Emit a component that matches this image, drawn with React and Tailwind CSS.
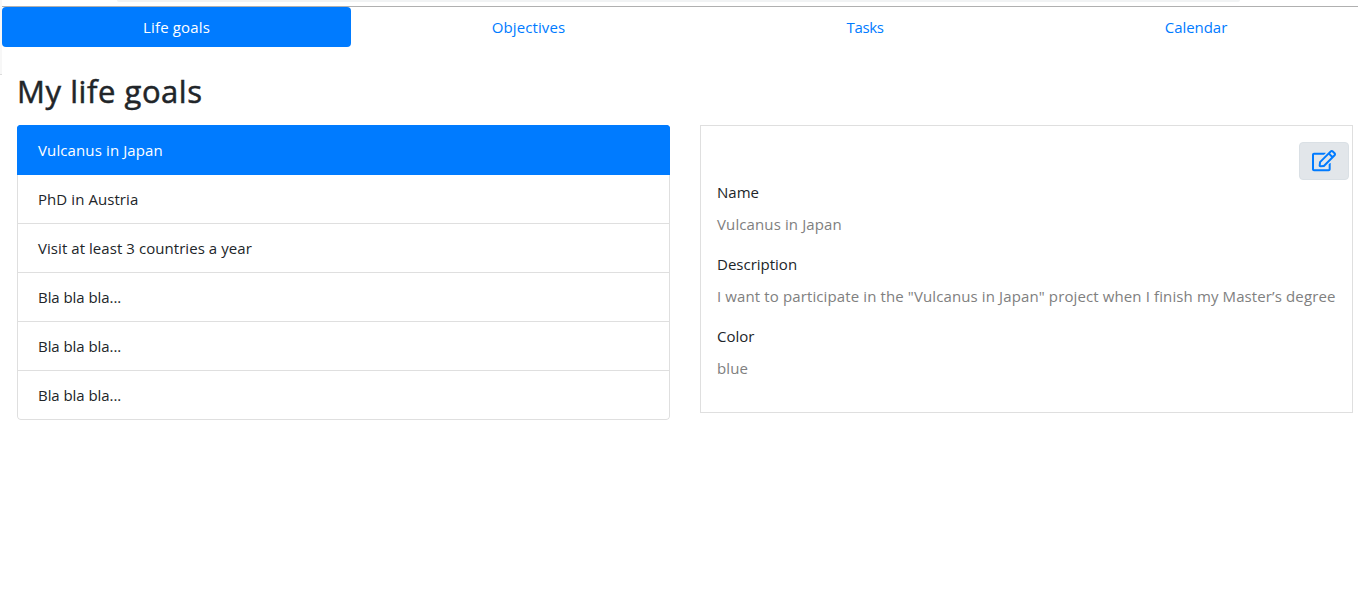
import { FaRegEdit } from "react-icons/fa";

const tabs = [
  { label: "Life goals", width: "w-[349px]", text: "tracking-[0.15px]", active: true },
  { label: "Objectives", width: "w-[355px]", text: "tracking-[0.1px]" },
  { label: "Tasks", width: "w-[318px]", text: "tracking-[-0.4px]" },
  { label: "Calendar", width: "w-[344px]", text: "tracking-[-0.05px]" },
];

const goals = [
  { name: "Vulcanus in Japan", text: "tracking-[0.12px]" },
  { name: "PhD in Austria", text: "tracking-[0.07px]" },
  { name: "Visit at least 3 countries a year", text: "tracking-[0.06px]" },
  { name: "Bla bla bla...", text: "tracking-[-0.06px]" },
  { name: "Bla bla bla...", text: "tracking-[-0.06px]" },
  { name: "Bla bla bla...", text: "tracking-[-0.06px]" },
];

const fields = [
  ["Name", "Vulcanus in Japan"],
  ["Description", "I want to participate in the \"Vulcanus in Japan\" project when I finish my Master’s degree"],
  ["Color", "blue"],
];

export default function App() {
  return (
    <div className="relative h-[612px] w-full overflow-hidden bg-white font-['Open_Sans','Noto_Sans',sans-serif] text-[15px] leading-6 text-[#212529]">
      <div className="absolute left-0 top-0 h-[75px] w-[2px] border-b border-[#dcdcdc] bg-[#f7f7f7]" />
      <div className="ml-[2px] w-[1366px]">
        <div className="h-[7px] border-b border-[#b0b0b0] pl-[115px]">
          <div className="h-[2px] w-[1123px] rounded-b-[4px] bg-[#f1f3f4]" />
        </div>
        <nav className="flex">
          {tabs.map((t) => (
            <a
              key={t.label}
              className={`${t.width} ${t.text} shrink-0 rounded py-2 text-center ${t.active ? "bg-[#007bff] text-white" : "text-[#007bff]"}`}
            >
              {t.label}
            </a>
          ))}
        </nav>
        <main className="px-[15px] pt-[25px]">
          <h1 className="text-[31px] font-medium leading-[38px] tracking-[0.56px] [-webkit-text-stroke:0.5px_#212529]">
            <span>My life goals</span>
          </h1>
          <div className="mt-[15px] flex gap-[30px]">
            <ul className="w-[653px] overflow-hidden rounded">
              {goals.map((g, i) => (
                <li
                  key={i}
                  className={
                    i === 0
                      ? "border border-[#007bff] bg-[#007bff] px-5 py-3 text-white"
                      : "border border-t-0 border-[#dfdfdf] px-5 py-3 last:rounded-b"
                  }
                >
                  <span className={g.text}>{g.name}</span>
                </li>
              ))}
            </ul>
            <section className="h-[288px] w-[653px] border border-[#dfdfdf] pl-4 pr-[3px] pt-4">
              <div className="flex justify-end">
                <button className="flex h-[38px] w-[50px] items-center justify-center rounded border border-[#dae0e5] bg-[#e2e6ea] text-[#007bff]">
                  <FaRegEdit className="h-[21.333px] w-6" />
                </button>
              </div>
              <dl>
                {fields.map(([name, value]) => (
                  <div key={name} className="mb-4">
                    <dt className="mb-2">
                      <span>{name}</span>
                    </dt>
                    <dd className="whitespace-nowrap tracking-[0.117px] text-[#808080]">
                      <span>{value}</span>
                    </dd>
                  </div>
                ))}
              </dl>
            </section>
          </div>
        </main>
      </div>
    </div>
  );
}
